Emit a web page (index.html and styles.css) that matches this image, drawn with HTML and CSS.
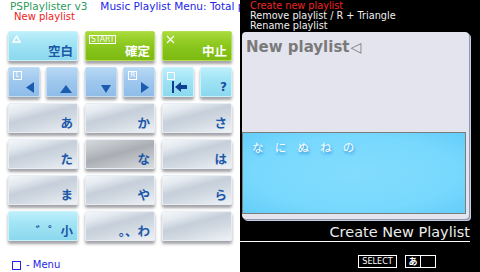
FILE: index.html
```html
<!DOCTYPE html>
<html>
<head>
<meta charset="utf-8">
<link rel="stylesheet" href="styles.css">
</head>
<body>
<div class="screen">
  <div class="left">
    <div class="hdr"><span class="app">PSPlaylister v3</span><span class="title">Music Playlist Menu: Total playlists</span></div>
    <div class="sub">New playlist</div>
    <div class="kbd">
      <div class="row">
        <div class="key wide cyan">
          <svg class="ic" width="9" height="8" viewBox="0 0 9 8"><polygon points="4.5,1.2 8,7 1,7" fill="none" stroke="#fff" stroke-width="1.4"/></svg>
          <span class="lbl">空白</span>
        </div>
        <div class="key wide green">
          <span class="start">START</span>
          <span class="lbl white">確定</span>
        </div>
        <div class="key wide green">
          <svg class="ic" width="9" height="9" viewBox="0 0 9 9"><path d="M1 1L8 8M8 1L1 8" stroke="#fff" stroke-width="1.1"/></svg>
          <span class="lbl white">中止</span>
        </div>
      </div>
      <div class="row">
        <div class="key small blue">
          <span class="bbox">L</span>
          <svg class="gl" width="8" height="11" viewBox="0 0 8 11"><polygon points="0,5.5 8,0 8,11" fill="#1a5cb0"/></svg>
        </div>
        <div class="key small blue">
          <span class="sp"></span>
          <svg class="gl" width="12" height="8" viewBox="0 0 12 8"><polygon points="6,0 12,8 0,8" fill="#1a5cb0"/></svg>
        </div>
        <div class="key small blue">
          <span class="sp"></span>
          <svg class="gl" width="10" height="8" viewBox="0 0 10 8"><polygon points="0,0 10,0 5,8" fill="#1a5cb0"/></svg>
        </div>
        <div class="key small blue">
          <span class="bbox">R</span>
          <svg class="gl" width="8" height="11" viewBox="0 0 8 11"><polygon points="8,5.5 0,0 0,11" fill="#1a5cb0"/></svg>
        </div>
        <div class="key small cyan">
          <span class="sq"></span>
          <svg class="gl" width="16" height="12" viewBox="0 0 16 12"><rect x="0" y="0" width="2" height="12" fill="#0f3f90"/><polygon points="3,6 9,1 9,4 15,4 15,8 9,8 9,11" fill="#0f3f90"/></svg>
        </div>
        <div class="key small cyan">
          <span class="sp"></span>
          <span class="lbl q">?</span>
        </div>
      </div>
      <div class="row">
        <div class="key wide gray"><span class="sp"></span><span class="lbl">あ</span></div>
        <div class="key wide gray"><span class="sp"></span><span class="lbl">か</span></div>
        <div class="key wide gray"><span class="sp"></span><span class="lbl">さ</span></div>
      </div>
      <div class="row">
        <div class="key wide gray"><span class="sp"></span><span class="lbl">た</span></div>
        <div class="key wide sel"><span class="sp"></span><span class="lbl">な</span></div>
        <div class="key wide gray"><span class="sp"></span><span class="lbl">は</span></div>
      </div>
      <div class="row">
        <div class="key wide gray"><span class="sp"></span><span class="lbl">ま</span></div>
        <div class="key wide gray"><span class="sp"></span><span class="lbl">や</span></div>
        <div class="key wide gray"><span class="sp"></span><span class="lbl">ら</span></div>
      </div>
      <div class="row">
        <div class="key wide cyan"><span class="sp"></span><span class="lbl">゛゜小</span></div>
        <div class="key wide gray"><span class="sp"></span><span class="lbl">。、わ</span></div>
        <div class="key wide gray"><span class="sp"></span><span class="lbl"></span></div>
      </div>
    </div>
    <div class="foot"><span class="fsq"></span><span>- Menu</span></div>
  </div>
  <div class="right">
    <div class="menu">
      <div class="mi act">Create new playlist</div>
      <div class="mi">Remove playlist / R + Triangle</div>
      <div class="mi">Rename playlist</div>
    </div>
    <div class="panel">
      <div class="ptitle">New playlist<span class="caret">◁</span></div>
      <div class="cand">なにぬねの</div>
    </div>
    <div class="ctitle">Create New Playlist</div>
    <div class="btns">
      <span class="selb">SELECT</span>
      <span class="kb"><span class="kc">あ</span><span class="kc"></span></span>
    </div>
  </div>
</div>
</body>
</html>
```
FILE: styles.css
```css
html, body {
  margin: 0;
  padding: 0;
  background: #000;
}
.screen {
  width: 480px;
  height: 272px;
  display: flex;
  overflow: hidden;
  font-family: "DejaVu Sans", "Noto Sans CJK JP", sans-serif;
}
.left {
  width: 240px;
  height: 272px;
  background: #fff;
  overflow: hidden;
  display: flex;
  flex-direction: column;
  flex-shrink: 0;
}
.hdr {
  padding: 1px 0 0 10px;
  height: 11px;
  line-height: 11px;
  font-size: 10.5px;
  white-space: nowrap;
}
.app { color: #2e9a5c; }
.title { color: #2424e8; margin-left: 13px; }
.sub {
  padding-left: 14px;
  height: 10px;
  line-height: 10px;
  font-size: 10px;
  color: #f02020;
}
.kbd {
  margin-top: 9px;
  padding: 0 8px;
  display: flex;
  flex-direction: column;
  gap: 6px;
}
.row {
  display: flex;
  justify-content: space-between;
  height: 30px;
}
.key {
  box-sizing: border-box;
  height: 30px;
  border: 1px solid #e6edf4;
  border-radius: 2px;
  box-shadow: 0 3px 3px rgba(50, 50, 60, 0.45);
  display: flex;
  flex-direction: column;
  justify-content: space-between;
  padding: 2px 4px 3px 3px;
}
.wide { width: 70px; }
.small { width: 32px; }
.gray {
  background: linear-gradient(165deg, #f4f7fa 0%, #e4eaf0 20%, #c6cfda 42%, #cfd7e0 60%, #eef2f6 100%);
}
.sel {
  background: linear-gradient(165deg, #d6dade 0%, #c0c4c9 25%, #aaaeb4 48%, #bcc0c4 68%, #dadde0 100%);
}
.cyan {
  background: linear-gradient(180deg, #bdf0fb 0%, #a2e4f5 40%, #8cd8ee 100%);
  border-color: #c8f2fb;
}
.blue {
  background: linear-gradient(180deg, #b6d8f4 0%, #a0c8ee 45%, #8ebce8 100%);
  border-color: #c4dcf4;
}
.green {
  background: linear-gradient(180deg, #a8da3c 0%, #8cc81e 45%, #7cba12 100%);
  border-color: #b4e050;
}
.ic { display: block; margin-top: 1px; }
.sp { display: block; height: 1px; }
.lbl {
  align-self: flex-end;
  font-family: "Noto Sans CJK JP", sans-serif;
  font-weight: 700;
  font-size: 12.5px;
  line-height: 12px;
  color: #1c58a8;
  white-space: nowrap;
}
.lbl.white { color: #fff; }
.lbl.q {
  font-family: "DejaVu Sans", sans-serif;
  font-weight: 700;
  font-size: 12px;
  color: #1a4ea0;
}
.start {
  align-self: flex-start;
  border: 1px solid #fff;
  color: #fff;
  font-size: 8.5px;
  line-height: 7px;
  padding: 0 1px;
  font-family: "DejaVu Sans Condensed", "DejaVu Sans", sans-serif;
  font-stretch: condensed;
  margin-top: 1px;
}
.bbox {
  align-self: flex-start;
  box-sizing: border-box;
  width: 9px;
  height: 9px;
  border: 1px solid #fff;
  color: #fff;
  font-size: 7px;
  line-height: 7px;
  text-align: center;
  margin: 1px 0 0 1px;
}
.sq {
  box-sizing: border-box;
  width: 8px;
  height: 8px;
  border: 1px solid #fff;
  margin: 2px 0 0 1px;
}
.gl { align-self: flex-end; display: block; margin-right: 1px; }
.foot {
  margin-top: auto;
  margin-bottom: 2px;
  padding-left: 12px;
  display: flex;
  align-items: center;
  gap: 5px;
  color: #2424e8;
  font-size: 10px;
  line-height: 10px;
}
.fsq {
  box-sizing: border-box;
  width: 9px;
  height: 9px;
  border: 1px solid #2424e8;
}
.right {
  width: 240px;
  height: 272px;
  background: #000;
  display: flex;
  flex-direction: column;
  flex-shrink: 0;
}
.menu {
  height: 31px;
  padding: 1px 0 0 10px;
  overflow: hidden;
  font-size: 9.7px;
  line-height: 10px;
  color: #f0f0f0;
  white-space: nowrap;
}
.mi.act { color: #f02424; }
.panel {
  margin-left: 2px;
  width: 227px;
  height: 187px;
  box-sizing: border-box;
  background: #e4e4ee;
  border-radius: 4px;
  box-shadow: 1px 1px 0 #8e96b0, 2px 2px 0 #c8cce0;
  display: flex;
  flex-direction: column;
}
.ptitle {
  padding: 6px 0 0 4px;
  font-weight: 700;
  font-size: 15px;
  line-height: 18px;
  color: #7a7a7a;
}
.caret {
  font-weight: 400;
  font-size: 14px;
  margin-left: 1px;
}
.cand {
  margin-top: auto;
  margin-bottom: 5px;
  width: 224px;
  height: 82px;
  box-sizing: border-box;
  border: 1px solid #7c7c7c;
  background: radial-gradient(ellipse at 50% 50%, #82dcfe 0%, #78d8fd 65%, #62cdf9 100%);
  padding: 7px 0 0 9px;
  font-family: "Noto Sans CJK JP", sans-serif;
  font-size: 11.5px;
  line-height: 14px;
  letter-spacing: 11.2px;
  color: #fff;
  text-shadow: 1px 2px 3px #2a8cd8;
}
.ctitle {
  margin: 5px 10px 0 0;
  height: 18px;
  box-sizing: border-box;
  border-bottom: 1px solid #fff;
  text-align: right;
  font-size: 14.5px;
  line-height: 17px;
  color: #ececec;
  white-space: nowrap;
}
.btns {
  margin-top: 13px;
  padding-right: 44px;
  display: flex;
  justify-content: flex-end;
  gap: 8px;
}
.selb {
  box-sizing: border-box;
  width: 39px;
  height: 13px;
  border: 1px solid #fff;
  color: #fff;
  font-size: 9px;
  line-height: 11px;
  text-align: center;
  font-stretch: condensed;
  font-family: "DejaVu Sans Condensed", "DejaVu Sans", sans-serif;
}
.kb {
  box-sizing: border-box;
  width: 31px;
  height: 13px;
  border: 1px solid #fff;
  display: flex;
}
.kc {
  flex: 1;
  color: #fff;
  font-family: "Noto Sans CJK JP", sans-serif;
  font-weight: 700;
  font-size: 9px;
  line-height: 11px;
  text-align: center;
}
.kc + .kc { border-left: 1px solid #fff; }
```
